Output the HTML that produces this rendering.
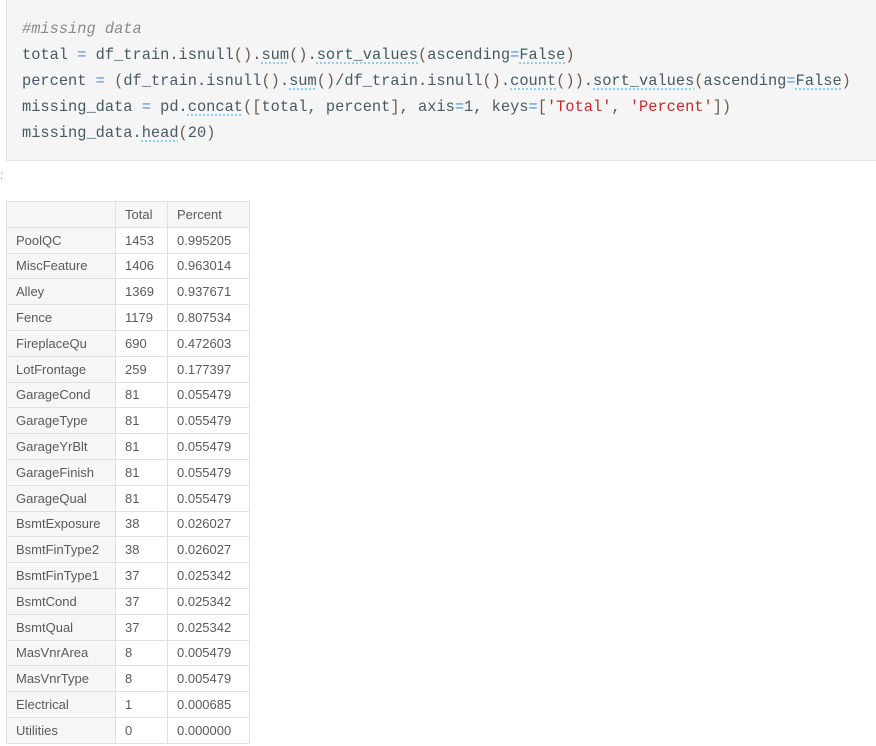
<!DOCTYPE html>
<html><head><meta charset="utf-8"><style>
body{margin:0;background:#fff;width:876px;height:746px;overflow:hidden;position:relative;font-family:"Liberation Sans",sans-serif}
.code{position:absolute;left:6px;top:-1px;width:870px;height:162px;background:#f5f5f5;border:1px solid #e4e4e4;border-right:none;box-sizing:border-box}
pre{margin:0;position:absolute;left:15px;top:16px;font-family:"Liberation Mono",monospace;font-size:15.35px;line-height:26px;color:#455a64}
.c{color:#8a8a8a;font-style:italic}.o{color:#4a90d9}.s{color:#c62828}.p{color:#6d5a50}
.u{text-decoration:underline dotted #8ccff0;text-decoration-thickness:2px;text-underline-offset:3px}
.colon{position:absolute;left:0;top:168px;color:#999;font-size:12px}
table{position:absolute;left:6px;top:201px;border-collapse:collapse;font-size:13px;color:#5a5a5a}
td,th{border:1px solid #e0e0e0;height:24.8px;padding:0 9px;text-align:left;font-weight:normal}
th{background:#f5f6f6}
td.i{background:#f5f6f6;width:90px}
td.t{width:33px}td.v{width:63px}
</style></head><body>
<div class="code"><pre><span class="c">#missing data</span>
total <span class="o">=</span> df_train.isnull<span class="p">()</span>.<span class="u">sum</span><span class="p">()</span>.<span class="u">sort_values</span><span class="p">(</span>ascending<span class="o">=</span><span class="u">False</span><span class="p">)</span>
percent <span class="o">=</span> <span class="p">(</span>df_train.isnull<span class="p">()</span>.<span class="u">sum</span><span class="p">()</span>/df_train.isnull<span class="p">()</span>.<span class="u">count</span><span class="p">())</span>.<span class="u">sort_values</span><span class="p">(</span>ascending<span class="o">=</span><span class="u">False</span><span class="p">)</span>
missing_data <span class="o">=</span> pd.<span class="u">concat</span><span class="p">([</span>total, percent<span class="p">]</span>, axis<span class="o">=</span>1, keys<span class="o">=</span><span class="p">[</span><span class="s">'Total'</span>, <span class="s">'Percent'</span><span class="p">])</span>
missing_data.<span class="u">head</span><span class="p">(</span>20<span class="p">)</span></pre></div>
<div class="colon">:</div>
<table>
<tr><th style="width:90px"></th><th>Total</th><th>Percent</th></tr>
<tr><td class="i">PoolQC</td><td class="t">1453</td><td class="v">0.995205</td></tr>
<tr><td class="i">MiscFeature</td><td>1406</td><td>0.963014</td></tr>
<tr><td class="i">Alley</td><td>1369</td><td>0.937671</td></tr>
<tr><td class="i">Fence</td><td>1179</td><td>0.807534</td></tr>
<tr><td class="i">FireplaceQu</td><td>690</td><td>0.472603</td></tr>
<tr><td class="i">LotFrontage</td><td>259</td><td>0.177397</td></tr>
<tr><td class="i">GarageCond</td><td>81</td><td>0.055479</td></tr>
<tr><td class="i">GarageType</td><td>81</td><td>0.055479</td></tr>
<tr><td class="i">GarageYrBlt</td><td>81</td><td>0.055479</td></tr>
<tr><td class="i">GarageFinish</td><td>81</td><td>0.055479</td></tr>
<tr><td class="i">GarageQual</td><td>81</td><td>0.055479</td></tr>
<tr><td class="i">BsmtExposure</td><td>38</td><td>0.026027</td></tr>
<tr><td class="i">BsmtFinType2</td><td>38</td><td>0.026027</td></tr>
<tr><td class="i">BsmtFinType1</td><td>37</td><td>0.025342</td></tr>
<tr><td class="i">BsmtCond</td><td>37</td><td>0.025342</td></tr>
<tr><td class="i">BsmtQual</td><td>37</td><td>0.025342</td></tr>
<tr><td class="i">MasVnrArea</td><td>8</td><td>0.005479</td></tr>
<tr><td class="i">MasVnrType</td><td>8</td><td>0.005479</td></tr>
<tr><td class="i">Electrical</td><td>1</td><td>0.000685</td></tr>
<tr><td class="i">Utilities</td><td>0</td><td>0.000000</td></tr>
</table>
</body></html>
